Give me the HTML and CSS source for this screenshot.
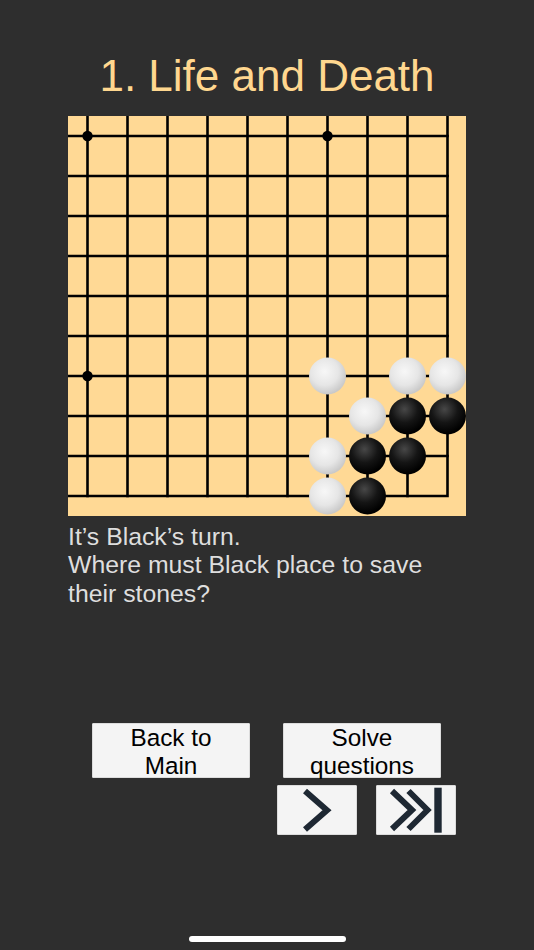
FILE: index.html
```html
<!DOCTYPE html>
<html lang="en">
<head>
<meta charset="utf-8">
<title>Life and Death</title>
<link rel="stylesheet" href="styles.css">
</head>
<body>
<main class="screen">
  <h1 class="title">1. Life and Death</h1>
  <div class="board">
    <svg width="398" height="400" viewBox="0 0 398 400" xmlns="http://www.w3.org/2000/svg">
      <defs>
        <radialGradient id="gw" cx="42%" cy="38%" r="62%">
          <stop offset="0" stop-color="#f7f7f7"/>
          <stop offset="0.6" stop-color="#e6e6e6"/>
          <stop offset="1" stop-color="#c9c9c9"/>
        </radialGradient>
        <radialGradient id="gb" cx="42%" cy="32%" r="65%">
          <stop offset="0" stop-color="#474747"/>
          <stop offset="0.55" stop-color="#151515"/>
          <stop offset="1" stop-color="#000"/>
        </radialGradient>
      </defs>
      <g stroke="#000" stroke-width="2.6" stroke-linecap="square" fill="none">
        <path d="M19.5 0V380M59.5 0V380M99.5 0V380M139.5 0V380M179.5 0V380M219.5 0V380M259.5 0V380M299.5 0V380M339.5 0V380"/>
        <path d="M0 20H379.5M0 60H379.5M0 100H379.5M0 140H379.5M0 180H379.5M0 220H379.5M0 260H379.5M0 300H379.5M0 340H379.5"/>
        <path d="M379.5 0V380H0" stroke-linejoin="miter"/>
      </g>
      <g fill="#000">
        <circle cx="19.5" cy="20" r="5.2"/>
        <circle cx="259.5" cy="20" r="5.2"/>
        <circle cx="19.5" cy="260" r="5.2"/>
      </g>
      <g fill="url(#gw)">
        <circle cx="259.5" cy="260" r="18.5"/>
        <circle cx="339.5" cy="260" r="18.5"/>
        <circle cx="379.5" cy="260" r="18.5"/>
        <circle cx="299.5" cy="300" r="18.5"/>
        <circle cx="259.5" cy="340" r="18.5"/>
        <circle cx="259.5" cy="380" r="18.5"/>
      </g>
      <g fill="url(#gb)">
        <circle cx="339.5" cy="300" r="18.5"/>
        <circle cx="379.5" cy="300" r="18.5"/>
        <circle cx="299.5" cy="340" r="18.5"/>
        <circle cx="339.5" cy="340" r="18.5"/>
        <circle cx="299.5" cy="380" r="18.5"/>
      </g>
    </svg>
  </div>
  <p class="question">It’s Black’s turn.<br>Where must Black place to save their stones?</p>
  <div class="actions">
    <button class="btn text-btn"><span class="label">Back to<br>Main</span></button>
    <button class="btn text-btn"><span class="label">Solve<br>questions</span></button>
  </div>
  <div class="nav">
    <button class="btn nav-btn" aria-label="Next">
      <svg width="80" height="50" viewBox="0 0 80 50" xmlns="http://www.w3.org/2000/svg">
        <path d="M28 6L50 25.3L28 44.6" fill="none" stroke="#1e2833" stroke-width="6" stroke-linejoin="miter"/>
      </svg>
    </button>
    <button class="btn nav-btn" aria-label="Last">
      <svg width="80" height="50" viewBox="0 0 80 50" xmlns="http://www.w3.org/2000/svg">
        <g fill="none" stroke="#1e2833" stroke-width="6" stroke-linejoin="miter">
          <path d="M16 6L36 25L16 44"/>
          <path d="M32.5 6L51.5 25L32.5 44"/>
        </g>
        <rect x="58.3" y="2.7" width="7.4" height="45" fill="#1e2833"/>
      </svg>
    </button>
  </div>
  <div class="home-indicator"></div>
</main>
</body>
</html>
```
FILE: styles.css
```css
html, body {
  margin: 0;
  padding: 0;
  background: #2e2e2e;
}

.screen {
  width: 534px;
  height: 950px;
  display: flex;
  flex-direction: column;
  font-family: "Liberation Sans", Arial, sans-serif;
}

.title {
  margin: 0;
  padding-top: 53px;
  height: 46px;
  line-height: 46px;
  font-size: 44px;
  font-weight: normal;
  text-align: center;
  color: #ffd78f;
}

.board {
  margin: 17px 0 0 68px;
  width: 398px;
  height: 400px;
  background: #ffd995;
}

.board svg {
  display: block;
}

.question {
  margin: 7px 0 0 68px;
  width: 400px;
  font-size: 24.8px;
  line-height: 28.3px;
  color: #dedede;
}

.actions {
  display: flex;
  gap: 33px;
  margin: 115px 0 0 92px;
}

.btn {
  margin: 0;
  padding: 0;
  border: 1px solid #dcdcdc;
  background: #f4f4f4;
  color: #000;
  font-family: "Liberation Sans", Arial, sans-serif;
  box-sizing: border-box;
  border-radius: 1px;
}

.text-btn {
  width: 158px;
  height: 55px;
  font-size: 24.3px;
  line-height: 28px;
  text-align: center;
  overflow: visible;
  white-space: nowrap;
}

.label {
  display: block;
}

.nav {
  display: flex;
  gap: 19px;
  margin: 7px 0 0 277px;
}

.nav-btn {
  width: 80px;
  height: 50px;
}

.nav-btn svg {
  display: block;
  margin: -1px;
}

.home-indicator {
  margin: 101px 0 0 189px;
  width: 157px;
  height: 6px;
  border-radius: 3px;
  background: #fff;
}
```
